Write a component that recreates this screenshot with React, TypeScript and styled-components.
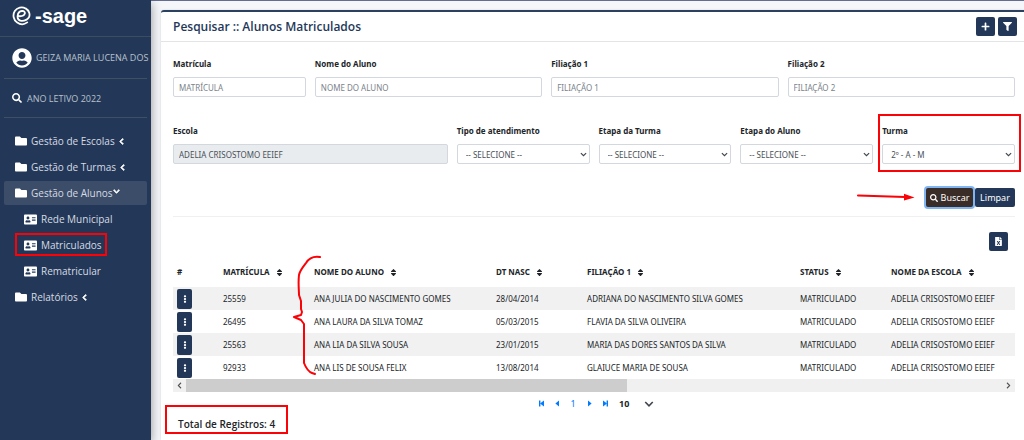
import React from "react";
import styled, { createGlobalStyle, css } from "styled-components";
import {
  FaAddressCard,
  FaChevronDown,
  FaChevronLeft,
  FaChevronRight,
  FaEllipsisV,
  FaFileExcel,
  FaFilter,
  FaFolder,
  FaPlus,
  FaSearch,
  FaSort,
  FaUserCircle,
} from "react-icons/fa";

const NAVY = "#233858";
const RED = "#fb0207";
const OPEN_SANS = `"Open Sans", "Noto Sans", sans-serif`;

const GlobalStyle = createGlobalStyle`
  *, *::before, *::after { box-sizing: border-box; }
  body { margin: 0; background: #f4f6f9; }
  body, button, input, select, table {
    font-family: "Noto Sans", "Open Sans", sans-serif;
    font-size: 8px;
    color: #212529;
  }
  button { cursor: pointer; }
`;

const Page = styled.div`
  display: flex;
  min-height: 100vh;
  overflow: hidden;
`;

/* ---------- sidebar ---------- */

const Sidebar = styled.aside`
  position: relative;
  flex: 0 0 151px;
  min-width: 0;
  background: ${NAVY};
  color: #d3d9e2;
  font-family: ${OPEN_SANS};
  box-shadow: 0 3px 10px rgba(0, 0, 0, 0.4);
`;

const Brand = styled.a`
  display: flex;
  align-items: center;
  gap: 4px;
  height: 37px;
  padding: 0 12px 4px;
  border-bottom: 1px solid #3c4d60;
  color: #fff;
  font: bold 20px/24px "Liberation Sans", Arial, sans-serif;
  text-decoration: none;
`;

const SideLine = styled.div<{ $height: number; $gap: number }>`
  display: flex;
  align-items: center;
  gap: ${(p) => p.$gap}px;
  height: ${(p) => p.$height}px;
  margin: 0 4px;
  padding-left: 8px;
  border-bottom: 1px solid #3f4f64;
  color: #b9c1cd;
  font-size: 9px;
  white-space: nowrap;

  svg { flex: none; color: #fff; }
`;

const Menu = styled.ul`
  list-style: none;
  margin: 0;
  padding: 11px 4px;
`;

const MenuLink = styled.a<{ $active?: boolean; $sub?: boolean }>`
  display: flex;
  align-items: center;
  height: 24px;
  margin-bottom: 2px;
  padding-left: ${(p) => (p.$sub ? 20 : 11)}px;
  border-radius: 2px;
  background: ${(p) => (p.$active ? "#3b4d69" : "transparent")};
  color: #d6dbe3;
  font-size: 10px;
  text-decoration: none;
  white-space: nowrap;

  svg { flex: none; color: #fff; }
  svg:first-child { margin-right: 4px; }
  svg:nth-child(2) {
    margin-left: ${(p) => (p.$active ? 0 : 3)}px;
    margin-bottom: ${(p) => (p.$active ? 4 : 0)}px;
    stroke: #fff;
    stroke-width: 50px;
  }
`;

const outlined = css`
  &::after {
    content: "";
    position: absolute;
    border: 2px solid ${RED};
    pointer-events: none;
  }
`;

const MarkedItem = styled.li`
  position: relative;
  ${outlined}
  &::after { inset: 0 40px 1px 11px; }
`;

/* ---------- content ---------- */

const Main = styled.main`
  flex: 1;
  min-width: 0;
  display: flex;
  flex-direction: column;
  padding: 9px 0 0 10px;
  border-top: 1px solid #656c92;
`;

const Card = styled.section`
  flex: 1;
  border-top: 2px solid #2b4160;
  border-top-left-radius: 3px;
  background: #fff;
  box-shadow: 0 0 2px rgba(0, 0, 0, 0.15);
`;

const CardHeader = styled.header`
  display: flex;
  align-items: center;
  gap: 3px;
  height: 30px;
  padding: 0 7px 0 12px;
  border-bottom: 1px solid #e2e4e6;
`;

const Title = styled.h1`
  flex: 1;
  margin: 0;
  color: ${NAVY};
  font: 600 12px/18px ${OPEN_SANS};
`;

const IconButton = styled.button`
  display: grid;
  place-items: center;
  width: 19px;
  height: 19px;
  padding: 0;
  border: 0;
  border-radius: 2px;
  background: ${NAVY};
  color: #fff;
`;

const CardBody = styled.div`
  padding: 14px 9px 0 12px;
`;

const FormGrid = styled.form`
  display: grid;
  grid-template-columns: repeat(18, minmax(0, 1fr));
  column-gap: 9px;
  row-gap: 26px;
`;

const Field = styled.div<{ $span: number; $marked?: boolean }>`
  position: relative;
  grid-column: span ${(p) => p.$span};

  ${(p) =>
    p.$marked &&
    css`
      ${outlined}
      &::after { inset: -9px -6px -8px -4px; }
    `}
`;

const Label = styled.label`
  display: block;
  height: 21px;
  font-weight: 700;
  line-height: 16px;
`;

const control = css`
  display: block;
  width: 100%;
  height: 20px;
  padding: 0 5px;
  border: 1px solid #d3d8de;
  border-radius: 2px;
  background: #fff;
  color: #495057;
`;

const Input = styled.input`
  ${control}
  &::placeholder { color: #7b838a; opacity: 1; }
  &:disabled { background: #e9ecef; }
`;

const SelectWrap = styled.div`
  position: relative;
  svg {
    position: absolute;
    right: 3px;
    top: 7px;
    pointer-events: none;
  }
`;

const Select = styled.select`
  ${control}
  padding: 0 8px;
  appearance: none;
`;

const Actions = styled.div`
  display: flex;
  justify-content: flex-end;
  align-items: center;
  gap: 2px;
  grid-column: 1 / -1;
  height: 29px;
  margin-top: -2px;
  padding-bottom: 9px;
  border-bottom: 1px solid #f0f0f0;
`;

const Arrow = styled.svg`
  margin-right: 9px;
`;

const ActionButton = styled.button<{ $primary?: boolean }>`
  display: flex;
  align-items: center;
  justify-content: center;
  gap: 3px;
  width: ${(p) => (p.$primary ? 47 : 40)}px;
  height: 19px;
  padding: 0;
  border: 0;
  border-radius: 2px;
  background: ${(p) => (p.$primary ? "#3a2c26" : NAVY)};
  box-shadow: ${(p) => (p.$primary ? "0 0 0 2px #80b5f3" : "none")};
  color: #fff;
  font-size: 9px;
`;

const Export = styled.div`
  display: flex;
  justify-content: flex-end;
  padding: 15px 7px 0 0;
`;

const TableArea = styled.div`
  position: relative;
`;

const Table = styled.table`
  width: 100%;
  table-layout: fixed;
  border-collapse: collapse;

  th, td {
    padding: 0 0 0 4px;
    text-align: left;
    white-space: nowrap;
  }
  th { height: 36px; padding-top: 4px; font-weight: 700; }
  th svg { margin-left: 3px; vertical-align: -2px; }
  td { height: 23px; }
  tbody tr:nth-child(odd) { background: #f1f1f1; }
`;

const RowButton = styled(IconButton)`
  width: 15px;
  height: 20px;
`;

const Brace = styled.svg`
  position: absolute;
  left: 119px;
  top: 4px;
  pointer-events: none;
`;

const ScrollBar = styled.div`
  display: flex;
  align-items: center;
  height: 13px;
  background: #f0f0f0;
  color: #505050;

  svg { flex: none; margin: 0 3px; }
`;

const ScrollTrack = styled.div`
  flex: 1;
  height: 100%;
`;

const ScrollThumb = styled.div`
  width: 54%;
  height: 100%;
  background: #cdcdcd;
`;

const Pager = styled.nav`
  display: flex;
  align-items: center;
  justify-content: center;
  gap: 8px;
  height: 22px;
  padding-left: 4px;
`;

const PageButton = styled.button`
  display: grid;
  place-items: center;
  width: 8px;
  height: 16px;
  padding: 0;
  border: 0;
  background: none;
  color: #007bff;
  font-size: 9px;
`;

const PageSize = styled.div`
  position: relative;
  margin-left: 2px;
  select {
    width: 36px;
    height: 16px;
    padding: 0;
    border: 0;
    background: none;
    appearance: none;
    font-size: 9px;
    font-weight: 700;
  }
  svg { position: absolute; right: 1px; top: 4px; pointer-events: none; }
`;

const Total = styled.p`
  position: relative;
  width: max-content;
  margin: 0;
  padding: 2px 5px;
  font: 600 10px/16px ${OPEN_SANS};
  ${outlined}
  &::after { inset: -9px -8px 0 -8px; }
`;

/* ---------- drawings ---------- */

const Chevron = ({ size = 7 }: { size?: number }) => (
  <svg width={size} height={size} viewBox="0 0 8 8" fill="none" stroke="#3f464d" strokeWidth="1.3">
    <path d="M1 2.4 4 5.4 7 2.4" />
  </svg>
);

const LogoMark = () => (
  <svg width="19" height="20" viewBox="0 0 19 20" fill="none" stroke="#fff" strokeLinecap="round">
    <path d="M15.2 16.4C12.4 18.6 8.4 18.8 5.2 16.6 1.4 14 .4 8.8 2.8 5 5.2 1.4 10 .2 13.6 2.4c3.8 2.2 4.8 6.4 3.2 9.2-1.6 2.4-4.6 3.4-7.6 3.2-2.6-.4-3.8-2.4-3.6-4.8.2-2.8 2-4.8 4.4-5 2-.2 3.2 1 2.8 2.6-.6 2-3.4 2.8-6 2.6" strokeWidth="1.8" />
  </svg>
);

const PagerIcon = ({ back, edge }: { back?: boolean; edge?: boolean }) => (
  <svg width="7" height="7" viewBox="0 0 7 7" fill="currentColor">
    <g transform={back ? "matrix(-1 0 0 1 7 0)" : undefined}>
      <path d={edge ? "M1 .5 5 3.5 1 6.5z" : "M2 .5 5.6 3.5 2 6.5z"} />
      {edge && <path d="M4.6.5H6v6H4.6z" />}
    </g>
  </svg>
);

/* ---------- data ---------- */

const columns = [
  { title: "#", width: "5.46%", sort: false },
  { title: "MATRÍCULA", width: "10.81%", sort: true },
  { title: "NOME DO ALUNO", width: "21.62%", sort: true },
  { title: "DT NASC", width: "10.81%", sort: true },
  { title: "FILIAÇÃO 1", width: "25.3%", sort: true },
  { title: "STATUS", width: "10.81%", sort: true },
  { title: "NOME DA ESCOLA", width: "15.19%", sort: true },
];

const students = [
  ["25559", "ANA JULIA DO NASCIMENTO GOMES", "28/04/2014", "ADRIANA DO NASCIMENTO SILVA GOMES"],
  ["26495", "ANA LAURA DA SILVA TOMAZ", "05/03/2015", "FLAVIA DA SILVA OLIVEIRA"],
  ["25563", "ANA LIA DA SILVA SOUSA", "23/01/2015", "MARIA DAS DORES SANTOS DA SILVA"],
  ["92933", "ANA LIS DE SOUSA FELIX", "13/08/2014", "GLAIUCE MARIA DE SOUSA"],
];

const textFields = [
  { id: "matricula", label: "Matrícula", span: 3 },
  { id: "nome", label: "Nome do Aluno", span: 5 },
  { id: "filiacao1", label: "Filiação 1", span: 5 },
  { id: "filiacao2", label: "Filiação 2", span: 5 },
];

const selectFields = [
  { id: "tipo", label: "Tipo de atendimento", value: "-- SELECIONE --" },
  { id: "etapa-turma", label: "Etapa da Turma", value: "-- SELECIONE --" },
  { id: "etapa-aluno", label: "Etapa do Aluno", value: "-- SELECIONE --" },
  { id: "turma", label: "Turma", value: "2º - A - M", marked: true },
];

export default function App() {
  return (
    <Page>
      <GlobalStyle />
      <Sidebar>
        <Brand href="#">
          <LogoMark />
          <span>-sage</span>
        </Brand>
        <SideLine $height={42} $gap={4}>
          <FaUserCircle size={20} />
          <span>GEIZA MARIA LUCENA DOS</span>
        </SideLine>
        <SideLine $height={39} $gap={5}>
          <FaSearch size={10} />
          <span>ANO LETIVO 2022</span>
        </SideLine>
        <Menu>
          <li><MenuLink href="#"><FaFolder size={12} />Gestão de Escolas <FaChevronLeft size={7} /></MenuLink></li>
          <li><MenuLink href="#"><FaFolder size={12} />Gestão de Turmas <FaChevronLeft size={7} /></MenuLink></li>
          <li><MenuLink href="#" $active><FaFolder size={12} />Gestão de Alunos<FaChevronDown size={7} /></MenuLink></li>
          <li><MenuLink href="#" $sub><FaAddressCard size={13} />Rede Municipal</MenuLink></li>
          <MarkedItem><MenuLink href="#" $sub><FaAddressCard size={13} />Matriculados</MenuLink></MarkedItem>
          <li><MenuLink href="#" $sub><FaAddressCard size={13} />Rematricular</MenuLink></li>
          <li><MenuLink href="#"><FaFolder size={12} />Relatórios <FaChevronLeft size={7} /></MenuLink></li>
        </Menu>
      </Sidebar>

      <Main>
        <Card>
          <CardHeader>
            <Title>Pesquisar :: Alunos Matriculados</Title>
            <IconButton aria-label="Adicionar"><FaPlus size={9} /></IconButton>
            <IconButton aria-label="Filtrar"><FaFilter size={9} /></IconButton>
          </CardHeader>
          <CardBody>
            <FormGrid onSubmit={(e) => e.preventDefault()}>
              {textFields.map((f) => (
                <Field key={f.id} $span={f.span}>
                  <Label htmlFor={f.id}>{f.label}</Label>
                  <Input id={f.id} placeholder={f.label.toUpperCase()} />
                </Field>
              ))}
              <Field $span={6}>
                <Label htmlFor="escola">Escola</Label>
                <Input id="escola" defaultValue="ADELIA CRISOSTOMO EEIEF" disabled />
              </Field>
              {selectFields.map((f) => (
                <Field key={f.id} $span={3} $marked={f.marked}>
                  <Label htmlFor={f.id}>{f.label}</Label>
                  <SelectWrap>
                    <Select id={f.id}><option>{f.value}</option></Select>
                    <Chevron />
                  </SelectWrap>
                </Field>
              ))}
              <Actions>
                <Arrow width="58" height="10" viewBox="0 0 58 10" fill={RED}>
                  <path d="M1 2.4 48 4" stroke={RED} strokeWidth="2" strokeLinecap="round" />
                  <path d="M47 .8 57.5 4.4 47 7.4z" />
                </Arrow>
                <ActionButton $primary type="submit"><FaSearch size={8} />Buscar</ActionButton>
                <ActionButton type="reset">Limpar</ActionButton>
              </Actions>
            </FormGrid>

            <Export>
              <IconButton aria-label="Exportar para Excel"><FaFileExcel size={9} /></IconButton>
            </Export>

            <TableArea>
              <Table>
                <colgroup>
                  {columns.map((c) => <col key={c.title} style={{ width: c.width }} />)}
                </colgroup>
                <thead>
                  <tr>
                    {columns.map((c) => (
                      <th key={c.title} scope="col">{c.title} {c.sort && <FaSort size={9} />}</th>
                    ))}
                  </tr>
                </thead>
                <tbody>
                  {students.map((s) => (
                    <tr key={s[0]}>
                      <td><RowButton aria-label="Opções"><FaEllipsisV size={8} /></RowButton></td>
                      {s.map((v) => <td key={v}>{v}</td>)}
                      <td>MATRICULADO</td>
                      <td>ADELIA CRISOSTOMO EEIEF</td>
                    </tr>
                  ))}
                </tbody>
              </Table>
              <Brace width="30" height="122" viewBox="0 0 30 122" fill="none" stroke={RED} strokeWidth="2" strokeLinecap="round" strokeLinejoin="round">
                <path d="M28 2C22 1 17 3 14 8 11 12 8 15 7 20 6 28 7 35 7 40L9 46 9 54 10 57 9 60 2 62 9 65 12 69 12 108C14 113 17 117 20 118L23 119" />
              </Brace>
            </TableArea>
            <ScrollBar>
              <FaChevronLeft size={7} />
              <ScrollTrack><ScrollThumb /></ScrollTrack>
              <FaChevronRight size={7} />
            </ScrollBar>

            <Pager aria-label="Paginação">
              <PageButton aria-label="Primeira"><PagerIcon back edge /></PageButton>
              <PageButton aria-label="Anterior"><PagerIcon back /></PageButton>
              <PageButton>1</PageButton>
              <PageButton aria-label="Próxima"><PagerIcon /></PageButton>
              <PageButton aria-label="Última"><PagerIcon edge /></PageButton>
              <PageSize>
                <select aria-label="Registros por página"><option>10</option></select>
                <Chevron size={10} />
              </PageSize>
            </Pager>
            <Total>Total de Registros: 4</Total>
          </CardBody>
        </Card>
      </Main>
    </Page>
  );
}
